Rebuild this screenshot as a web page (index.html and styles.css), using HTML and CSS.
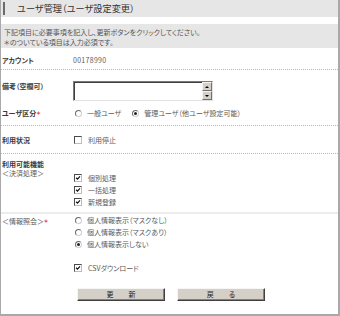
FILE: index.html
```html
<!DOCTYPE html>
<html lang="ja">
<head>
<meta charset="utf-8">
<title>ユーザ管理</title>
<link rel="stylesheet" href="styles.css">
</head>
<body>
<div class="panel">
  <div class="head"><h1 class="title">ユーザ管理（ユーザ設定変更）</h1></div>
  <div class="info">
    <p>下記項目に必要事項を記入し、更新ボタンをクリックしてください。</p>
    <p>＊のついている項目は入力必須です。</p>
  </div>

  <div class="row r-account dotted">
    <div class="lbl">アカウント</div>
    <div class="val num">00178990</div>
  </div>

  <div class="row r-note">
    <div class="lbl">備考（空欄可）</div>
    <div class="val">
      <div class="ta">
        <div class="ta-body"></div>
        <div class="ta-scroll"><span class="sb up"></span><span class="sb down"></span></div>
      </div>
    </div>
  </div>

  <div class="row r-type dotted">
    <div class="lbl">ユーザ区分<span class="req">＊</span></div>
    <div class="val inline">
      <span class="opt"><span class="radio"></span>一般ユーザ</span>
      <span class="opt"><span class="radio on"></span>管理ユーザ（他ユーザ設定可能）</span>
    </div>
  </div>

  <div class="row r-status dotted">
    <div class="lbl">利用状況</div>
    <div class="val"><span class="opt"><span class="cb"></span>利用停止</span></div>
  </div>

  <div class="group solid">
    <div class="lbl heading">利用可能機能</div>
    <div class="row sub">
      <div class="lbl sublbl">＜決済処理＞</div>
      <div class="val list">
        <span class="opt"><span class="cb on"><svg viewBox="0 0 7 7"><path d="M1.3 3.2 L2.9 4.9 L5.8 1.6"/></svg></span>個別処理</span>
        <span class="opt"><span class="cb on"><svg viewBox="0 0 7 7"><path d="M1.3 3.2 L2.9 4.9 L5.8 1.6"/></svg></span>一括処理</span>
        <span class="opt"><span class="cb on"><svg viewBox="0 0 7 7"><path d="M1.3 3.2 L2.9 4.9 L5.8 1.6"/></svg></span>新規登録</span>
      </div>
    </div>
  </div>

  <div class="row r-inq">
    <div class="lbl sublbl2">＜情報照会＞<span class="req">＊</span></div>
    <div class="val list">
      <span class="opt"><span class="radio"></span>個人情報表示（マスクなし）</span>
      <span class="opt"><span class="radio"></span>個人情報表示（マスクあり）</span>
      <span class="opt"><span class="radio on"></span>個人情報表示しない</span>
      <span class="opt csv"><span class="cb on"><svg viewBox="0 0 7 7"><path d="M1.3 3.2 L2.9 4.9 L5.8 1.6"/></svg></span>CSVダウンロード</span>
    </div>
  </div>

  <div class="actions">
    <button class="btn" type="button">更　新</button>
    <button class="btn" type="button">戻　る</button>
  </div>
</div>
</body>
</html>
```
FILE: styles.css
```css
html, body {
  margin: 0;
  padding: 0;
  background: #fff;
}
body {
  font-family: "Noto Sans CJK JP", "Noto Sans", sans-serif;
  font-feature-settings: "palt";
  font-size: 7px;
  color: #5a5a5a;
}
.panel {
  width: 337px;
  border-left: 1px solid #a9a9a9;
  border-right: 2px solid #a9a9a9;
  border-bottom: 2px solid #a9a9a9;
  padding-bottom: 13px;
}
.head {
  height: 17px;
  background: #e6e6e6;
  padding-top: 2px;
  box-sizing: border-box;
}
.title {
  margin: 0 0 0 2px;
  border-left: 2px solid #6a6a6a;
  padding-left: 12px;
  height: 13px;
  line-height: 13px;
  font-size: 9.2px;
  letter-spacing: 0;
  font-weight: normal;
  color: #333;
}
.info {
  margin-top: 7px;
  background: #e6e6e6;
  padding: 3px 3px 1px;
  line-height: 10px;
  color: #555;
}
.info p { margin: 0; }

.row {
  display: flex;
  padding-left: 1px;
  line-height: 10px;
}
.lbl {
  width: 71px;
  flex: none;
  font-weight: bold;
  color: #3a3a3a;
}
.val { flex: 1; }
.num { letter-spacing: 0.3px; }
.dotted { border-bottom: 1px dotted #b8b8b8; }
.solid { border-bottom: 2px solid #ececec; }

.r-account { padding-top: 7px; padding-bottom: 4px; }
.r-note { padding-top: 11px; }
.r-type { padding-top: 7px; padding-bottom: 7px; }
.r-status { padding-top: 9px; padding-bottom: 7px; }

.req {
  color: #e0201c;
  font-size: 5px;
  font-weight: bold;
  margin-left: 0;
  vertical-align: 1px;
}

.ta {
  width: 140px;
  height: 20px;
  box-sizing: border-box;
  border: 1px solid;
  border-color: #7a7a7a #e2e2e2 #e2e2e2 #7a7a7a;
  display: flex;
  background: #fff;
}
.ta-body { flex: 1; border-top: 1px solid #404040; border-left: 1px solid #404040; }
.ta-scroll {
  width: 10px;
  display: flex;
  flex-direction: column;
}
.sb {
  flex: 1;
  background: #d4d0c8;
  border: 1px solid;
  border-color: #f4f4f4 #707070 #707070 #f4f4f4;
  display: flex;
  align-items: center;
  justify-content: center;
}
.sb::after {
  content: "";
  border-left: 2px solid transparent;
  border-right: 2px solid transparent;
}
.sb.up::after { border-bottom: 2px solid #000; }
.sb.down::after { border-top: 2px solid #000; }

.inline { display: flex; gap: 11px; padding-left: 2px; }
.opt {
  display: inline-flex;
  align-items: center;
  color: #5a5a5a;
}
.radio {
  width: 7px;
  height: 7px;
  box-sizing: border-box;
  border-radius: 50%;
  border: 1px solid;
  border-color: #6a6a6a #cfcfcf #cfcfcf #6a6a6a;
  background: #fff;
  margin-right: 5px;
  position: relative;
}
.radio.on::after {
  content: "";
  position: absolute;
  left: 1px;
  top: 1px;
  width: 3px;
  height: 3px;
  border-radius: 50%;
  background: #222;
}
.cb {
  width: 8px;
  height: 8px;
  box-sizing: border-box;
  border: 1px solid;
  border-color: #4a4a4a #bdbdbd #bdbdbd #4a4a4a;
  background: #fff;
  margin-left: 1px;
  margin-right: 6px;
  display: inline-flex;
}
.cb svg { width: 6px; height: 6px; }
.cb path { fill: none; stroke: #111; stroke-width: 1.4; }

.group { padding-top: 6px; padding-bottom: 4px; }
.heading { line-height: 9px; padding-left: 1px; }
.sub { line-height: 8px; }
.sublbl { font-weight: normal; color: #5a5a5a; }
.list {
  display: flex;
  flex-direction: column;
  align-items: flex-start;
  line-height: 12px;
}
.sub .list { margin-top: 3px; }
.r-inq { line-height: 12px; }
.sublbl2 { font-weight: normal; color: #5a5a5a; padding-top: 1px; }
.r-inq .opt .radio { margin-left: 2px; }
.csv { margin-top: 12px; }

.actions {
  display: flex;
  gap: 12px;
  margin-top: 14px;
  padding-left: 76px;
}
.btn {
  width: 88px;
  height: 13px;
  padding: 0 0 0 4px;
  margin: 0;
  font-family: inherit;
  font-feature-settings: "palt";
  font-size: 7px;
  letter-spacing: 4px;
  line-height: 11px;
  color: #222;
  background: #d4d0c8;
  border: 1px solid;
  border-color: #f6f6f6 #404040 #404040 #f6f6f6;
  box-shadow: inset -1px -1px 0 #808080;
}
```
